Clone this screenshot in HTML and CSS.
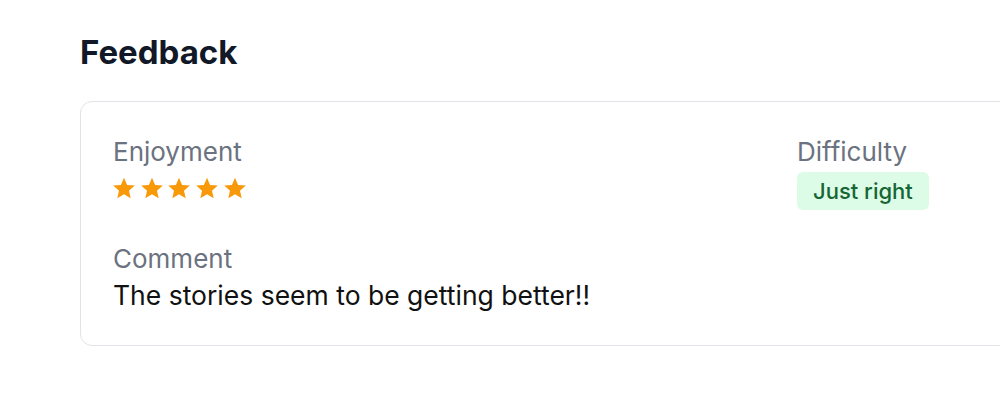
FILE: index.html
```html
<!DOCTYPE html>
<html lang="en">
<head>
<meta charset="utf-8">
<title>Feedback</title>
<link rel="stylesheet" href="styles.css">
</head>
<body>
<main class="page">
  <h2 class="title">Feedback</h2>
  <section class="card">
    <div class="row">
      <div class="field">
        <div class="label">Enjoyment</div>
        <div class="stars" aria-label="5 out of 5 stars">
          <svg class="star" viewBox="0 0 24 24"><path d="M12 1.8l3.1 7.1 7.7.7-5.8 5.1 1.7 7.6L12 18.3l-6.7 4 1.7-7.6-5.8-5.1 7.7-.7z"/></svg>
          <svg class="star" viewBox="0 0 24 24"><path d="M12 1.8l3.1 7.1 7.7.7-5.8 5.1 1.7 7.6L12 18.3l-6.7 4 1.7-7.6-5.8-5.1 7.7-.7z"/></svg>
          <svg class="star" viewBox="0 0 24 24"><path d="M12 1.8l3.1 7.1 7.7.7-5.8 5.1 1.7 7.6L12 18.3l-6.7 4 1.7-7.6-5.8-5.1 7.7-.7z"/></svg>
          <svg class="star" viewBox="0 0 24 24"><path d="M12 1.8l3.1 7.1 7.7.7-5.8 5.1 1.7 7.6L12 18.3l-6.7 4 1.7-7.6-5.8-5.1 7.7-.7z"/></svg>
          <svg class="star" viewBox="0 0 24 24"><path d="M12 1.8l3.1 7.1 7.7.7-5.8 5.1 1.7 7.6L12 18.3l-6.7 4 1.7-7.6-5.8-5.1 7.7-.7z"/></svg>
        </div>
      </div>
      <div class="field">
        <div class="label">Difficulty</div>
        <span class="badge">Just right</span>
      </div>
    </div>
    <div class="field comment">
      <div class="label">Comment</div>
      <p class="text">The stories seem to be getting better!!</p>
    </div>
  </section>
</main>
</body>
</html>
```
FILE: styles.css
```css
* { box-sizing: border-box; }
html, body {
  margin: 0;
  padding: 0;
  background: #ffffff;
  overflow: hidden;
}
body {
  font-family: "Inter", "Liberation Sans", sans-serif;
  color: #111827;
}
.page {
  padding: 32px 0 0 80px;
  width: 1600px;
}
.title {
  margin: 0 0 29px 0;
  font-size: 33px;
  line-height: 40px;
  font-weight: 700;
  color: #111827;
}
.card {
  width: 1402px;
  border: 1px solid #e2e3e8;
  border-radius: 12px;
  padding: 32px;
}
.row {
  display: grid;
  grid-template-columns: 652px 652px;
  column-gap: 32px;
}
.field {
  display: flex;
  flex-direction: column;
  align-items: flex-start;
}
.label {
  font-size: 26px;
  line-height: 36px;
  color: #6b7280;
}
.stars {
  display: flex;
  gap: 3.7px;
  margin: 5.5px 0 0 -1px;
}
.star {
  width: 24px;
  height: 24px;
  fill: #f8990a;
}
.badge {
  margin-top: 2px;
  height: 38px;
  padding: 0 16px;
  display: inline-flex;
  align-items: center;
  background: #dcfce7;
  color: #166534;
  font-size: 22px;
  font-weight: 500;
  border-radius: 6px;
}
.comment {
  margin-top: 31px;
}
.text {
  margin: 0;
  font-size: 26.5px;
  line-height: 36px;
  color: #111111;
}
```
